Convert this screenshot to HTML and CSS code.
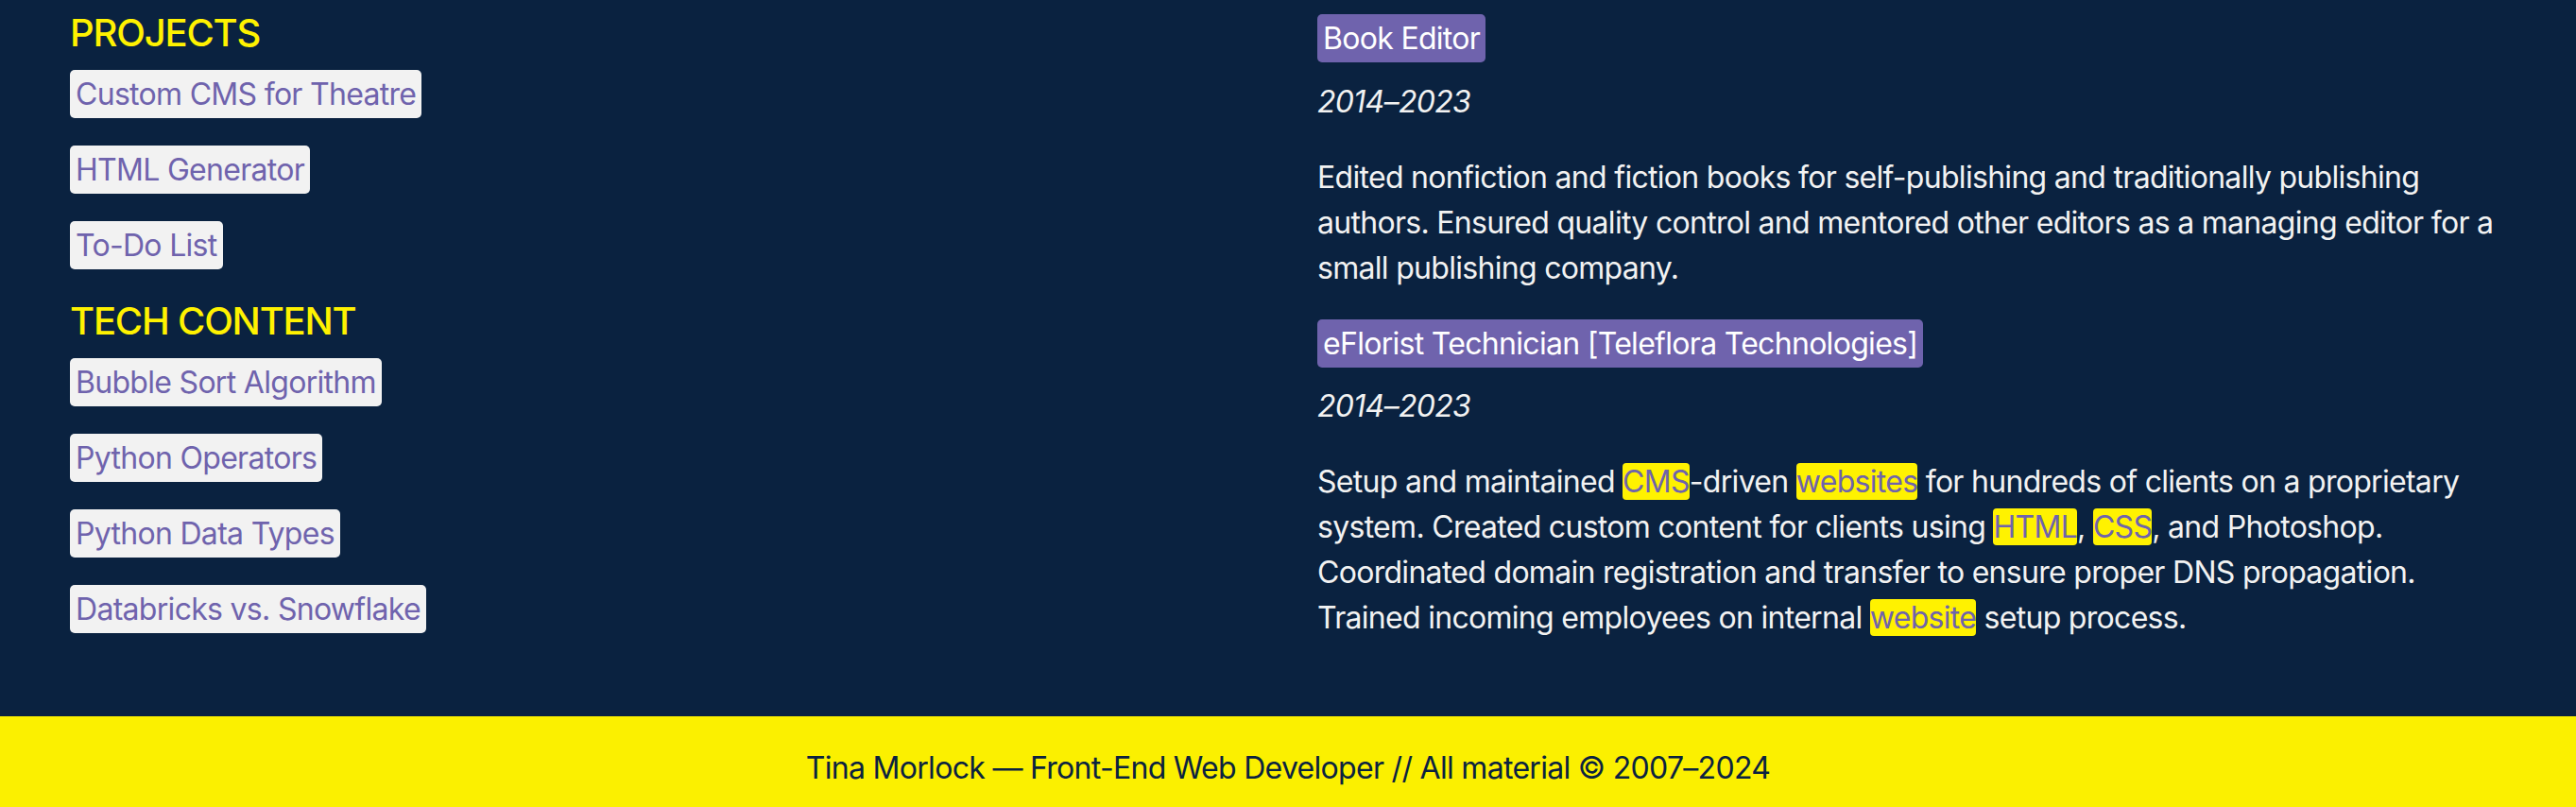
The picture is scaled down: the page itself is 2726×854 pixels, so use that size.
FILE: index.html
```html
<!DOCTYPE html>
<html lang="en">
<head>
<meta charset="utf-8">
<title>Tina Morlock — Front-End Web Developer</title>
<link rel="stylesheet" href="styles.css">
</head>
<body>
<main class="page">
  <div class="col col-left">
    <section class="group">
      <h2 class="group-title">PROJECTS</h2>
      <ul class="link-list">
        <li><a class="chip" href="#">Custom CMS for Theatre</a></li>
        <li><a class="chip" href="#">HTML Generator</a></li>
        <li><a class="chip" href="#">To-Do List</a></li>
      </ul>
    </section>
    <section class="group">
      <h2 class="group-title">TECH CONTENT</h2>
      <ul class="link-list">
        <li><a class="chip" href="#">Bubble Sort Algorithm</a></li>
        <li><a class="chip" href="#">Python Operators</a></li>
        <li><a class="chip" href="#">Python Data Types</a></li>
        <li><a class="chip" href="#">Databricks vs. Snowflake</a></li>
      </ul>
    </section>
  </div>
  <div class="col col-right">
    <article class="job">
      <h3 class="job-title"><span class="job-tag">Book Editor</span></h3>
      <p class="job-date">2014–2023</p>
      <p class="job-desc">Edited nonfiction and fiction books for self-publishing and traditionally publishing authors. Ensured quality control and mentored other editors as a managing editor for a small publishing company.</p>
    </article>
    <article class="job">
      <h3 class="job-title"><span class="job-tag">eFlorist Technician [Teleflora Technologies]</span></h3>
      <p class="job-date">2014–2023</p>
      <p class="job-desc">Setup and maintained <a class="hl" href="#">CMS</a>-driven <a class="hl" href="#">websites</a> for hundreds of clients on a proprietary system. Created custom content for clients using <a class="hl" href="#">HTML</a>, <a class="hl" href="#">CSS</a>, and Photoshop. Coordinated domain registration and transfer to ensure proper DNS propagation. Trained incoming employees on internal <a class="hl" href="#">website</a> setup process.</p>
    </article>
  </div>
</main>
<footer class="site-footer">
  <p class="footer-text">Tina Morlock — Front-End Web Developer // All material © 2007–2024</p>
</footer>
</body>
</html>
```

FILE: styles.css
```css
* {
  box-sizing: border-box;
}

html, body {
  margin: 0;
  padding: 0;
}

body {
  background: #0a2240;
  color: #f2f2f2;
  font-family: Inter, "Noto Sans", "Liberation Sans", sans-serif;
  font-size: 32px;
  line-height: 48px;
  letter-spacing: -0.7px;
}

.page {
  display: grid;
  grid-template-columns: 1258px 1fr;
  column-gap: 62px;
  padding: 0 56px 48px 74px;
}

.col-left {
  padding-top: 11px;
}

.col-right {
  padding-top: 17px;
}

.group-title {
  margin: 0 0 17px;
  font-size: 40px;
  line-height: 48px;
  font-weight: 500;
  letter-spacing: -1.2px;
  color: #fff200;
}

.link-list {
  list-style: none;
  margin: 0 0 32px;
  padding: 0;
  display: flex;
  flex-direction: column;
  gap: 32px;
}

.chip {
  background: #f2f2f2;
  color: #6f63ad;
  text-decoration: none;
  padding: 6px;
  border-radius: 5px;
}

.job-title {
  margin: 0 0 18.5px;
  font-size: 32px;
  line-height: 48px;
  font-weight: 400;
}

.job-tag {
  background: #6f63ad;
  color: #ffffff;
  padding: 6px;
  border-radius: 5px;
}

.job-date {
  margin: 0 0 32px;
  font-style: italic;
}

.job-desc {
  margin: 0 0 32px;
}

.hl {
  background: #fff200;
  color: #6f63ad;
  text-decoration: none;
  border-radius: 4px;
}

.site-footer {
  background: #fbf000;
  color: #0a2240;
  padding: 31px 20px 40px;
  text-align: center;
}

.footer-text {
  margin: 0;
}
```
